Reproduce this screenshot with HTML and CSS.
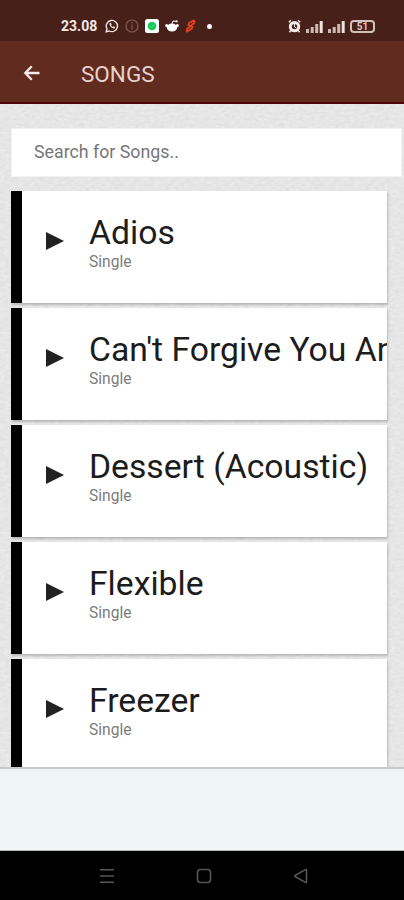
FILE: index.html
```html
<!DOCTYPE html>
<html lang="en">
<head>
    <meta charset="UTF-8">
    <meta name="viewport" content="width=device-width, initial-scale=1.0">
    <title>Songs</title>
    <link rel="stylesheet" href="styles.css">
</head>
<body>
    <div class="status-bar">
        <div class="status-left">
            <span class="clock">23.08</span>
            <svg width="14" height="14" viewBox="0 0 14 14"><path d="M1.2 12.8l.8-3A5.6 5.6 0 1 1 4.3 12z" fill="none" stroke="#eee3df" stroke-width="1.4"/><path d="M4.6 4.2c-.6 2.4 2.4 5.6 4.9 5.2l.7-1.3-1.7-.9-.8.7c-.7-.3-1.3-.9-1.6-1.7l.6-.7-.8-1.7z" fill="#eee3df"/></svg>
            <svg width="14" height="14" viewBox="0 0 14 14"><circle cx="7" cy="7" r="6" fill="none" stroke="#84594f" stroke-width="1.2"/><path d="M7 3.2v1.3M7 5.8v5" stroke="#84594f" stroke-width="1.3"/></svg>
            <svg width="14" height="14" viewBox="0 0 14 14"><rect width="14" height="14" rx="2.5" fill="#fff"/><circle cx="7" cy="7" r="4.3" fill="#16c95b"/><path d="M5 7l1.5 1.3L9 5.8" fill="none" stroke="#55df8a"/></svg>
            <svg width="14" height="14" viewBox="0 0 14 14"><ellipse cx="7" cy="8.5" rx="5.2" ry="4" fill="#fff"/><circle cx="1.7" cy="6.5" r="1.5" fill="#fff"/><circle cx="12.3" cy="6.5" r="1.5" fill="#fff"/><path d="M7 5l1-3 3 .5" fill="none" stroke="#fff"/><circle cx="11.5" cy="2.3" r="1.3" fill="#d9c9c5"/></svg>
            <svg width="11" height="14" viewBox="0 0 11 14"><path d="M9.5 1L4.2 3.8l-.7 2.5 4 1.2-.7 2.2L1.3 13M9.7 1.5l-.6 2.8-3 1.5M1.5 12.4l.7-2.8 3-1.6" fill="none" stroke="#e8401c" stroke-width="1.8"/></svg>
            <span class="dot"></span>
        </div>
        <div class="status-right">
            <svg width="13" height="14" viewBox="0 0 13 14"><circle cx="6.5" cy="7.6" r="4.2" fill="none" stroke="#f2e8e5" stroke-width="3"/><path d="M.8 3.2L3 1.2M12.2 3.2L10 1.2M2.8 11.4l-1.3 1.8M10.2 11.4l1.3 1.8" stroke="#f2e8e5" stroke-width="1.5"/><path d="M6.5 5v3l1.8 1" fill="none" stroke="#f2e8e5"/></svg>
            <svg class="signal" width="17" height="13" viewBox="0 0 17 13"><path d="M0 9h3v4H0zM4.7 7h3v6h-3zM9.2 4h3v9h-3z"/><path class="last" d="M13.7 1h3v12h-3z"/></svg>
            <svg class="signal" width="17" height="13" viewBox="0 0 17 13"><path d="M0 9h3v4H0zM4.7 7h3v6h-3zM9.2 4h3v9h-3z"/><path class="last" d="M13.7 1h3v12h-3z"/></svg>
            <span class="battery">51</span>
        </div>
    </div>

    <div class="header">
        <svg width="18" height="18" viewBox="0 0 18 18"><path d="M16.5 9H3M8.8 2.2L2.3 9l6.5 6.8" fill="none" stroke="#f6ebe8" stroke-width="2.3"/></svg>
        <h1>SONGS</h1>
    </div>

    <div class="content">
        <input class="search" type="text" placeholder="Search for Songs..">
        <div class="song">
            <span class="play"></span>
            <div class="info"><h2>Adios</h2><p>Single</p></div>
        </div>
        <div class="song">
            <span class="play"></span>
            <div class="info"><h2>Can't Forgive You An</h2><p>Single</p></div>
        </div>
        <div class="song">
            <span class="play"></span>
            <div class="info"><h2>Dessert (Acoustic)</h2><p>Single</p></div>
        </div>
        <div class="song">
            <span class="play"></span>
            <div class="info"><h2>Flexible</h2><p>Single</p></div>
        </div>
        <div class="song">
            <span class="play"></span>
            <div class="info"><h2>Freezer</h2><p>Single</p></div>
        </div>
    </div>

    <div class="ad-space"></div>

    <div class="nav-bar">
        <svg width="16" height="16" viewBox="0 0 16 16"><path d="M1 1.8h14M1 8h14M1 14.2h14"/></svg>
        <svg width="16" height="16" viewBox="0 0 16 16"><rect x="1.5" y="1.5" width="13" height="13" rx="3"/></svg>
        <svg width="16" height="16" viewBox="0 0 16 16"><path d="M13.5 1.8v12.4q-.3.6-1 .2L2 8.5q-.6-.5 0-1l10.5-5.9q.8-.4 1 .2z"/></svg>
    </div>
</body>
</html>
```

FILE: styles.css
```css
* {
    box-sizing: border-box;
}
body {
    margin: 0;
    height: 900px;
    display: flex;
    flex-direction: column;
    overflow: hidden;
    font-family: Roboto, sans-serif;
    background-color: #e6e6e6;
}
h1, h2, p {
    margin: 0;
    font-weight: 400;
}
svg {
    flex: none;
}
.status-bar {
    height: 41px;
    flex: none;
    display: flex;
    justify-content: space-between;
    padding: 12px 29px 0 61px;
    background-color: #48201a;
}
.status-left, .status-right {
    display: flex;
    align-items: center;
    height: 28px;
}
.status-left {
    gap: 6px;
}
.status-right {
    gap: 5px;
}
.clock {
    width: 38px;
    font-size: 14px;
    font-weight: 700;
    color: #f4e9e6;
}
.dot {
    width: 5px;
    height: 5px;
    margin-left: 5px;
    border-radius: 50%;
    background-color: #fff;
}
.signal {
    fill: #cfb9b2;
}
.signal .last {
    fill: #eee0dc;
}
.battery {
    width: 25px;
    height: 13px;
    border: 2px solid #d2c0ba;
    border-radius: 4px;
    font-size: 10px;
    font-weight: 700;
    line-height: 9px;
    text-align: center;
    color: #d9c8c2;
}
.header {
    height: 63px;
    flex: none;
    display: flex;
    align-items: center;
    gap: 40px;
    padding-left: 23px;
    background-color: #612b1f;
    border-bottom: 2px solid #4d0308;
}
.header h1 {
    font-size: 22.5px;
    line-height: 28px;
    padding-top: 4px;
    color: #e8d3cd;
}
.header svg {
    margin-top: 2px;
}
.content {
    height: 663px;
    flex: none;
    overflow: hidden;
    padding: 24px 0 0 11px;
    /* light paper grain */
    background: #e6e6e6 url("data:image/svg+xml,%3Csvg xmlns='http://www.w3.org/2000/svg' width='200' height='200'%3E%3Cfilter id='n' x='0' y='0' width='100%25' height='100%25' color-interpolation-filters='sRGB'%3E%3CfeTurbulence type='fractalNoise' baseFrequency='.2 .35' numOctaves='3' stitchTiles='stitch'/%3E%3CfeColorMatrix values='.07 0 0 0 .865 .07 0 0 0 .865 .07 0 0 0 .865 0 0 0 0 1'/%3E%3C/filter%3E%3Crect width='200' height='200' filter='url(%23n)'/%3E%3C/svg%3E");
}
.search {
    display: block;
    width: 391px;
    height: 49px;
    margin-bottom: 14px;
    padding: 0 22px 2px;
    border: 1px solid #f2f2f2;
    border-radius: 0;
    background-color: #fff;
    font-family: inherit;
    font-size: 17.8px;
}
.search::placeholder {
    color: #777;
}
.song {
    display: flex;
    width: 376px;
    height: 112px;
    margin-bottom: 5px;
    overflow: hidden;
    background-color: #fff;
    border-left: 11px solid #000;
    box-shadow: 1px 2px 2px rgba(0, 0, 0, 0.2);
}
.play {
    flex: none;
    margin: 41px 25px 0 24px;
    width: 18px;
    height: 18px;
    background-color: #222;
    clip-path: polygon(0 0, 100% 50%, 0 100%);
}
.info {
    padding-top: 21px;
    white-space: nowrap;
}
.info h2 {
    font-size: 33.7px;
    line-height: 42px;
    color: #1c1c1c;
}
.info p {
    font-size: 15.6px;
    line-height: 16px;
    color: #7c7c7c;
}
.ad-space {
    height: 84px;
    flex: none;
    background-color: #f0f6f5;
    border-top: 2px solid #c6caca;
    border-bottom: 1px solid #b5baba;
}
.nav-bar {
    height: 49px;
    flex: none;
    display: flex;
    justify-content: center;
    align-items: center;
    gap: 81px;
    padding-left: 4px;
    background-color: #000;
}
.nav-bar svg {
    fill: none;
    stroke: #555;
    stroke-width: 1.6;
}
```
